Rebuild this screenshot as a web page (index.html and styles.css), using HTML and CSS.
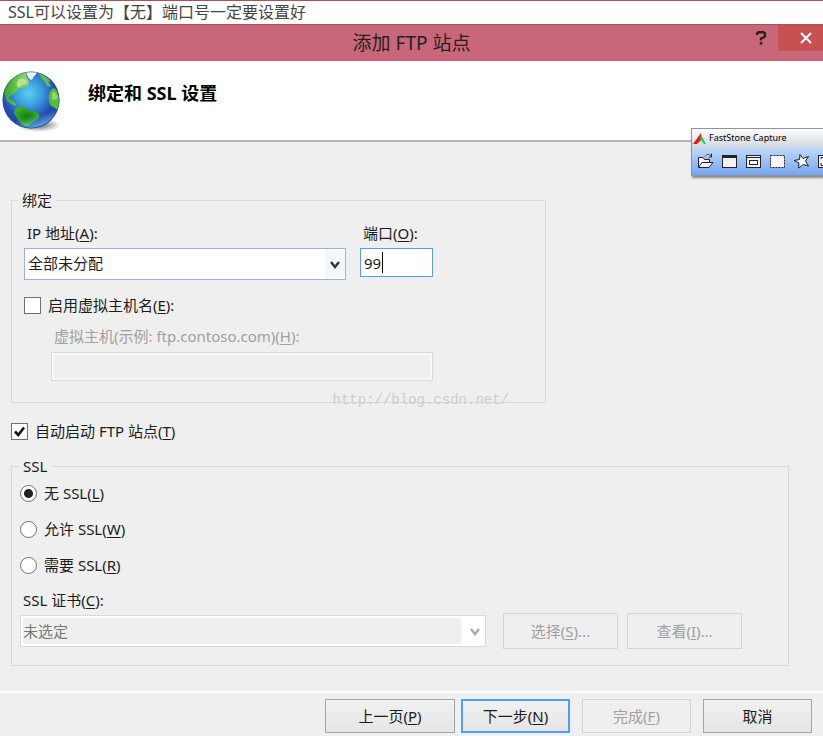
FILE: index.html
```html
<!DOCTYPE html>
<html lang="zh-CN">
<head>
<meta charset="utf-8">
<meta name="viewport" content="width=device-width, initial-scale=1">
<title>添加 FTP 站点</title>
<link rel="stylesheet" href="styles.css">
</head>
<body>
<p class="note">SSL可以设置为【无】端口号一定要设置好</p>
<main class="dialog">
  <header class="titlebar">
    <h1 class="title">添加 FTP 站点</h1>
    <div class="window-buttons">
      <button class="window-button" type="button" aria-label="帮助">
        <svg width="12" height="14" viewBox="0 0 12 14"><path d="M2 4V2.5L3.5 1.2H8.5L10 2.5V5L8.5 6.5L6 7.5V9.5" fill="none" stroke="#222" stroke-width="2.4"/><rect x="4.7" y="11" width="2.6" height="2.6" fill="#222"/></svg>
      </button>
      <button class="window-button close" type="button" aria-label="关闭">
        <svg width="12" height="12" viewBox="0 0 12 12"><path d="M1 1L11 11M11 1L1 11" stroke="#fff" stroke-width="2"/></svg>
      </button>
    </div>
  </header>

  <section class="banner">
    <svg class="globe" width="62" height="64" viewBox="0 0 62 64">
      <defs>
        <radialGradient id="sea" cx="46%" cy="38%" r="64%">
          <stop offset="0" stop-color="#5ad2f0"/><stop offset=".35" stop-color="#3a9edd"/><stop offset=".72" stop-color="#2548b4"/><stop offset="1" stop-color="#23459f"/>
        </radialGradient>
        <linearGradient id="rim" x1=".35" y1="0" x2=".65" y2="1">
          <stop offset=".78" stop-color="#7fdcff" stop-opacity="0"/><stop offset="1" stop-color="#7fdcff" stop-opacity=".7"/>
        </linearGradient>
        <radialGradient id="shade"><stop offset=".3" stop-color="#555" stop-opacity=".7"/><stop offset="1" stop-color="#777" stop-opacity="0"/></radialGradient>
        <linearGradient id="land" x1="0" y1="0" x2="1" y2="0"><stop offset="0" stop-color="#2c9d2c"/><stop offset=".5" stop-color="#5fc644"/><stop offset="1" stop-color="#a4d67a"/></linearGradient>
        <radialGradient id="south"><stop offset="0" stop-color="#137d1a"/><stop offset="1" stop-color="#3bb02a"/></radialGradient>
        <clipPath id="ball"><circle cx="31" cy="31" r="28.500"/></clipPath>
      </defs>
      <ellipse cx="38" cy="56" rx="23" ry="7" fill="url(#shade)"/>
      <circle cx="31" cy="31" r="28.500" fill="url(#sea)"/>
      <g clip-path="url(#ball)">
        <path d="M2 24Q5 12 13 6Q19 2 28 3Q25 6 27 9Q30 12 28 16Q25 17 23 19Q20 18 17 21Q15 25 11 26Q8 28 10 31Q13 31 15 34Q17 36 15 37Q10 35 7 32Q5 29 5 26Z" fill="url(#land)"/>
        <path d="M18 11Q22 8 26 11Q28 14 24 15Q21 16 19 19Q16 17 17 14Z" fill="#c3e08c"/>
        <path d="M27 2H36Q38 5 34 7Q33 10 31 11Q28 9 27 6Z" fill="#e6f2ea"/>
        <path d="M38 4Q46 6 51 13L48 12L51 18L47 17Q46 13 42 10Z" fill="#62bd55"/>
        <path d="M52 20Q55 18 57 22Q61 29 60 38Q58 42 55 39Q49 37 49 31Q48 24 52 20Z" fill="#55bd3c"/>
        <path d="M52 23Q56 22 58 29Q55 32 52 30Z" fill="#9fd36b"/>
        <path d="M15 40Q19 36 24 38Q28 42 35 43Q41 45 39 48Q35 53 31 54Q29 58 25 57Q20 55 17 49Q13 45 15 40Z" fill="url(#south)"/>
      </g>
      <circle cx="31" cy="31" r="28" fill="url(#rim)"/>
      <circle cx="31" cy="31" r="28" fill="none" stroke="#224f9c" stroke-opacity=".4"/>
    </svg>
    <h2 class="heading">绑定和 SSL 设置</h2>
    <aside class="capture">
      <div class="capture-title">
        <svg width="15" height="13" viewBox="0 0 15 13"><path d="M1 12L9 1V8L5 12Z" fill="#e91414"/><path d="M9 3L14 12H12L8 7Z" fill="#35c43d"/></svg>
        <span>FastStone Capture</span>
      </div>
      <div class="capture-tools">
        <svg width="17" height="16" viewBox="0 0 17 16"><path d="M1.500 14V4.500H6L7.500 6.500H12.500V9M1.500 14.500L5 9.500H16L12 14.500ZM8 3.500C10 1 12 1 14 3M14.500 .5V4H11.500" fill="#f6f6f6" stroke="#222"/></svg>
        <svg width="17" height="16" viewBox="0 0 17 16"><rect x="1.500" y="2.500" width="14" height="12" fill="#f2f2f2" stroke="#222"/><path d="M1 3.500H16" stroke="#222" stroke-width="3"/></svg>
        <svg width="17" height="16" viewBox="0 0 17 16"><rect x="1.500" y="2.500" width="14" height="12" fill="#f2f2f2" stroke="#222"/><path d="M1 4.500H16" stroke="#222"/><rect x="4.500" y="7.500" width="8" height="4" fill="#fff" stroke="#222"/></svg>
        <svg width="17" height="16" viewBox="0 0 17 16"><rect x="1.500" y="2.500" width="14" height="12" fill="#f6f6f6" stroke="#222" stroke-dasharray="2 1"/></svg>
        <svg width="17" height="16" viewBox="0 0 17 16"><path d="M7 1.500L10 5.500L15.500 3.500L12.500 8L15.500 13L10.500 11.500L5.500 15L6 10L1 7.500L6.500 6.500Z" fill="#f6f6f6" stroke="#222"/></svg>
        <svg width="17" height="16" viewBox="0 0 17 16"><rect x="1.500" y="2.500" width="14" height="12" fill="#f2f2f2" stroke="#222"/><path d="M4 6V4.500H6M4 10V12.500H6" fill="none" stroke="#222"/></svg>
      </div>
    </aside>
  </section>

  <form class="form">
    <fieldset class="group binding">
      <legend>绑定</legend>
      <div class="address">
        <div class="field">
          <label class="inset" for="ip">IP 地址(<u>A</u>):</label>
          <div class="combo">
            <select id="ip" accesskey="a"><option>全部未分配</option></select>
            <svg class="arrow" width="12" height="10" viewBox="0 0 12 10"><path d="M2 2L6 7L10 2" fill="none" stroke="#333" stroke-width="2.4"/></svg>
          </div>
        </div>
        <div class="field port">
          <label class="inset" for="port">端口(<u>O</u>):</label>
          <div class="port-box"><input id="port" class="textbox active" type="text" value="99" accesskey="o"><span class="caret"></span></div>
        </div>
      </div>
      <label class="choice"><input type="checkbox" accesskey="e"><span>启用虚拟主机名(<u>E</u>):</span></label>
      <div class="field host">
        <label class="inset" for="host">虚拟主机(示例: ftp.contoso.com)(<u>H</u>):</label>
        <input id="host" class="textbox" type="text" disabled>
      </div>
      <span class="watermark">http://blog.csdn.net/</span>
    </fieldset>

    <label class="choice autostart"><span class="tick-box"><input type="checkbox" accesskey="t" checked><svg class="tick" width="17" height="17" viewBox="0 0 17 17"><path d="M4 8.500L7.300 12L13 4.500" fill="none" stroke="#111" stroke-width="2.600"/></svg></span><span>自动启动 FTP 站点(<u>T</u>)</span></label>

    <fieldset class="group ssl">
      <legend>SSL</legend>
      <div class="options">
        <label class="choice"><input type="radio" name="ssl" accesskey="l" checked><span>无 SSL(<u>L</u>)</span></label>
        <label class="choice"><input type="radio" name="ssl" accesskey="w"><span>允许 SSL(<u>W</u>)</span></label>
        <label class="choice"><input type="radio" name="ssl" accesskey="r"><span>需要 SSL(<u>R</u>)</span></label>
      </div>
      <label class="inset cert-label" for="cert">SSL 证书(<u>C</u>):</label>
      <div class="cert">
        <div class="combo off">
          <select id="cert" disabled><option>未选定</option></select>
          <svg class="arrow" width="12" height="10" viewBox="0 0 12 10"><path d="M2 2L6 7L10 2" fill="none" stroke="#aaa" stroke-width="2.4"/></svg>
        </div>
        <button class="button" type="button" disabled>选择(<u>S</u>)...</button>
        <button class="button" type="button" disabled>查看(<u>I</u>)...</button>
      </div>
    </fieldset>
  </form>

  <footer class="actions">
    <button class="button back" type="button" accesskey="p">上一页(<u>P</u>)</button>
    <button class="button default" type="button" accesskey="n">下一步(<u>N</u>)</button>
    <button class="button" type="button" disabled>完成(<u>F</u>)</button>
    <button class="button" type="button">取消</button>
  </footer>
</main>
</body>
</html>
```
FILE: styles.css
```css
* { box-sizing: border-box; }

body {
  margin: 0;
  border-top: 1px solid #a9505f;
  background: #fff;
  color: #1c1c1c;
  font: 15px/20px "Noto Sans", "Noto Sans CJK SC", sans-serif;
  overflow-x: hidden;
}

button, input, select { font: inherit; color: inherit; margin: 0; }
svg { display: block; flex: none; }
u { text-underline-offset: 2px; }

.note {
  margin: 0;
  padding-left: 8px;
  font-size: 16px;
  line-height: 23px;
  color: #444;
}

.dialog { background: #efefef; }

.titlebar {
  position: relative;
  display: flex;
  justify-content: center;
  height: 37px;
  border-top: 1px solid #a9505f;
  background: #c96679;
}
.title { margin: 0; font-size: 19px; font-weight: 400; line-height: 37px; color: #222; }
.window-buttons { position: absolute; top: 0; right: 0; display: flex; }
.window-button {
  display: flex;
  align-items: center;
  justify-content: center;
  width: 35px;
  height: 26px;
  padding: 0;
  border: 0;
  background: none;
}
.window-button.close { width: 45px; padding-left: 11px; background: #c75050; }

.banner {
  position: relative;
  display: flex;
  gap: 26px;
  height: 81px;
  padding-top: 8px;
  border-bottom: 2px solid #b4b4b4;
  background: #fff;
}
.heading { margin: 0; padding-top: 12px; font-size: 18px; line-height: 24px; font-weight: 700; color: #000; }

.capture {
  position: absolute;
  top: 67px;
  right: 0;
  width: 132px;
  overflow: hidden;
  border: solid #8b95a5;
  border-width: 1px 0 1px 1px;
  box-shadow: 1px 2px 2px #888;
}
.capture-title {
  display: flex;
  align-items: center;
  gap: 2px;
  height: 18px;
  background: linear-gradient(#fdfdfd, #d4d8dc);
  font-size: 9px;
  line-height: 16px;
  color: #000;
}
.capture-tools {
  display: flex;
  align-items: center;
  gap: 7px;
  height: 28px;
  padding-left: 5px;
  background: linear-gradient(#c3dbfb, #74a5f0);
}

.form { padding: 48px 34px 25px 11px; }
.group { position: relative; min-width: 0; margin: 0; border: 1px solid #d9d9d9; }
.group legend { padding: 0 4px; }
.binding { max-width: 535px; padding: 13px 112px 21px 12px; }
.binding legend { margin-left: -6px; }
.inset { display: block; padding-left: 3px; }
.field { display: flex; flex-direction: column; gap: 5px; }
.address { display: flex; gap: 14px; margin-bottom: 15px; }
.address .field { flex: 1; }
.address .port { flex: 0 0 73px; }

.combo { position: relative; }
.combo select {
  display: block;
  width: 100%;
  height: 32px;
  padding: 0 24px 2px 3px;
  border: 1px solid #9fb4d0;
  border-radius: 0;
  background: linear-gradient(#f2f8fe, #f2f8fe) right / 20px 100% no-repeat #fff;
  appearance: none;
}
.arrow { position: absolute; top: 12px; right: 5px; pointer-events: none; }
.combo.off select {
  padding: 2px 24px 2px 2px;
  border: 1px solid #d9d9d9;
  background: linear-gradient(#efefef, #efefef) content-box no-repeat, #fff border-box;
  color: #777;
  opacity: 1;
}

.textbox { width: 100%; height: 29px; padding: 0 3px; border: 1px solid #abadb3; background: #fff; }
.textbox.active { border: 1px solid #569de5; }
.textbox:focus { outline: 0; }
.textbox:disabled { border: 1px solid #d9d9d9; background: #efefef; box-shadow: inset 0 0 0 2px #f8f8f8; }
.port-box { position: relative; }
.caret { position: absolute; top: 4px; left: 22px; width: 1px; height: 21px; background: #000; }

.choice { display: flex; align-items: center; gap: 7px; width: fit-content; }
.choice input {
  display: block;
  appearance: none;
  flex: none;
  width: 17px;
  height: 17px;
  border: 1px solid #707070;
  background: #fff;
}
.choice input[type="radio"] { border-radius: 50%; }
.choice input[type="radio"]:checked { background: radial-gradient(circle, #222 4px, #fff 5px); }
.tick-box { position: relative; }
.tick { position: absolute; top: 0; left: 0; visibility: hidden; pointer-events: none; }
input:checked + .tick { visibility: visible; }

.host { margin: 11px 0 0 27px; color: #a0a0a0; }
.host .textbox { margin-top: 1px; }
.watermark {
  position: absolute;
  right: 36px;
  bottom: -8px;
  font: 14px/20px "Liberation Mono", monospace;
  color: #cdcdcd;
}

.autostart { margin: 18px 0 15px; }
.ssl { padding: 7px 46px 16px 8px; }
.ssl legend { margin-left: -1px; }
.options { display: flex; flex-direction: column; gap: 16px; }
.cert-label { margin: 15px 0 3px; }
.cert { display: flex; align-items: center; gap: 9px; }
.cert .combo { flex: 1; margin-right: 8px; }
.cert .button { width: 115px; height: 36px; }

.button {
  width: 109px;
  height: 34px;
  padding: 0;
  border: 1px solid #a4a4a4;
  background: linear-gradient(#f1f1f1, #e5e5e5);
}
.button:disabled { border-color: #d4d4d4; background: #efefef; color: #a0a0a0; }
.button.default { border: 2px solid #4da0fb; }
.button.back { width: 130px; margin-right: -6px; }

.actions {
  display: flex;
  justify-content: flex-end;
  gap: 12px;
  padding: 6px 11px 3px;
  border-top: 2px solid #fff;
}
```
